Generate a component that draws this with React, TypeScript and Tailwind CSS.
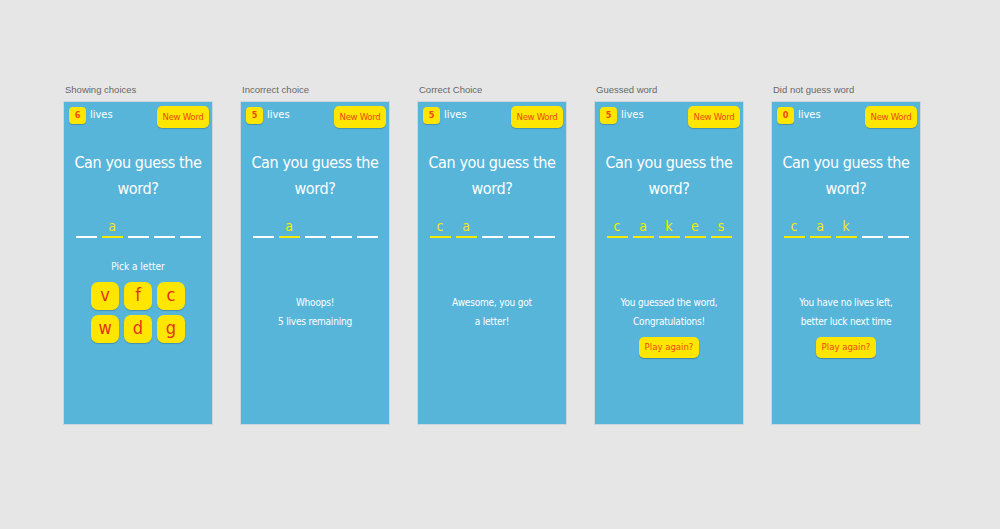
import React from "react"

type Screen = {
    label: string
    lives: number
    word: string[]
    choices?: string[]
    message?: string[]
    playAgain?: boolean
}

const screens: Screen[] = [
    { label: "Showing choices", lives: 6, word: ["", "a", "", "", ""], choices: ["v", "f", "c", "w", "d", "g"] },
    { label: "Incorrect choice", lives: 5, word: ["", "a", "", "", ""], message: ["Whoops!", "5 lives remaining"] },
    { label: "Correct Choice", lives: 5, word: ["c", "a", "", "", ""], message: ["Awesome, you got", "a letter!"] },
    { label: "Guessed word", lives: 5, word: ["c", "a", "k", "e", "s"], message: ["You guessed the word,", "Congratulations!"], playAgain: true },
    { label: "Did not guess word", lives: 0, word: ["c", "a", "k", "", ""], message: ["You have no lives left,", "better luck next time"], playAgain: true },
]

const hand = "font-['DejaVu_Sans_Condensed','Liberation_Sans_Narrow',Lato,sans-serif]"

function Phone({ s }: { s: Screen }) {
    return (
        <div className="flex flex-col">
            <p className="text-[9.5px] leading-[12px] text-[#666] font-['Liberation_Sans',Arial,sans-serif] mb-[5px] pl-[2px]">
                {s.label}
            </p>
            <div className={`w-[150px] h-[324px] bg-[#57b5da] border border-[#cdd6de] flex flex-col ${hand}`}>
                {/* header */}
                <div className="flex justify-between items-start pl-[5px] pr-[3px] pt-[4px] h-[28px]">
                    <div className="flex items-center gap-[4px] mt-[1px]">
                        <span className="w-[17px] h-[17px] rounded-[4px] bg-[#ffe600] shadow-[0_1px_1px_rgba(0,0,0,0.2)] text-[#ec4a12] text-[9px] font-semibold flex items-center justify-center">
                            {s.lives}
                        </span>
                        <span className="text-white text-[11px]">lives</span>
                    </div>
                    <button className="w-[52px] h-[22px] rounded-[5px] bg-[#ffe600] shadow-[0_1px_1px_rgba(0,0,0,0.2)] text-[#ec4a12] text-[9.5px] font-medium tracking-[-0.3px]">
                        New Word
                    </button>
                </div>

                <h1 className="text-white text-center text-[16px] leading-[26px] mt-[20px] tracking-[-0.4px]">
                    Can you guess the
                    <br />
                    word?
                </h1>

                {/* word */}
                <div className="flex justify-center gap-[5px] mt-[15px]">
                    {s.word.map((l, i) => (
                        <div key={i} className="flex flex-col items-center w-[21px]">
                            <span className="h-[18px] leading-[18px] text-[14px] text-[#f7ea00]">{l}</span>
                            <span className={`w-[21px] h-[2px] mt-[1px] ${l ? "bg-[#f7ea00]" : "bg-white"}`} />
                        </div>
                    ))}
                </div>

                {s.choices && (
                    <div className="flex flex-col items-center mt-[21px]">
                        <p className="text-white text-[10px] leading-[16px]">Pick a letter</p>
                        <div className="grid grid-cols-3 gap-[5px] mt-[7px]">
                            {s.choices.map((c) => (
                                <button
                                    key={c}
                                    className="w-[28px] h-[28px] rounded-[7px] bg-[#ffe600] shadow-[0_1px_1px_rgba(0,0,0,0.2)] text-[#e0321a] text-[18px] font-medium leading-none pb-[2px]"
                                >
                                    {c}
                                </button>
                            ))}
                        </div>
                    </div>
                )}

                {s.message && (
                    <div className="flex flex-col items-center mt-[55px]">
                        <p className="text-white text-center text-[10px] leading-[19px] tracking-[-0.2px]">
                            {s.message[0]}
                            <br />
                            {s.message[1]}
                        </p>
                        {s.playAgain && (
                            <button className="mt-[6px] w-[60px] h-[21px] rounded-[5px] bg-[#ffe600] shadow-[0_1px_1px_rgba(0,0,0,0.25)] text-[#ec4a12] text-[9.5px] font-medium">
                                Play again?
                            </button>
                        )}
                    </div>
                )}
            </div>
        </div>
    )
}

export default function App() {
    return (
        <div className="w-[1000px] h-[529px] bg-[#e6e6e6] pl-[63px] pt-[84px] flex gap-[27px]">
            {screens.map((s) => (
                <Phone key={s.label} s={s} />
            ))}
        </div>
    )
}
